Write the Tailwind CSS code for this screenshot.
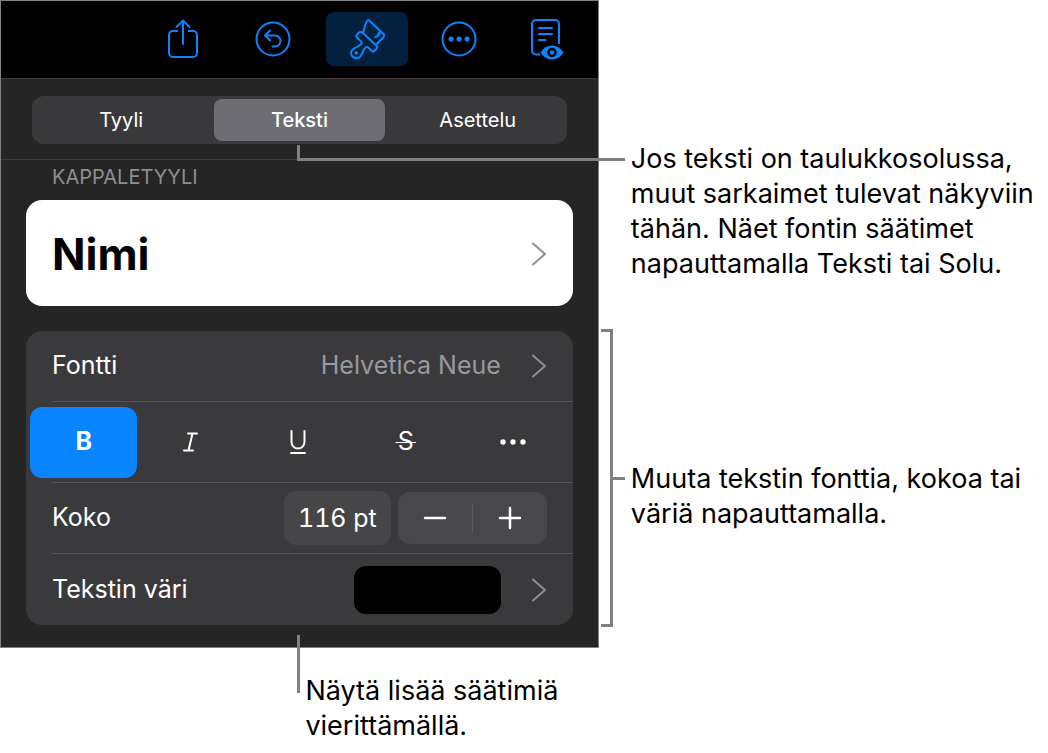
<!DOCTYPE html>
<html lang="fi">

<head>
    <meta charset="UTF-8">
    <meta name="viewport" content="width=device-width, initial-scale=1.0">
    <title>Tekstin muotoilu</title>
    <script src="https://cdn.jsdelivr.net/npm/@tailwindcss/browser@4"></script>
</head>

<body class="bg-white font-['Inter',sans-serif] text-black">
    <main class="grid grid-cols-[4fr_3fr]">
        <div>
            <!-- Format panel -->
            <section class="relative border border-[#808080] bg-[#252525] text-white" aria-label="Muotoilu">
                <nav class="flex h-[77px] items-center justify-end gap-2.5 bg-black pr-3.5 pb-0.5 text-[#0a84ff]">
                    <button type="button" aria-label="Jaa" class="flex h-[54px] w-[74px] items-center justify-center">
                        <svg class="h-10 w-8" viewBox="0 0 32 40" fill="none" stroke="currentColor" stroke-width="2" stroke-linecap="round" stroke-linejoin="round">
                            <path d="M11 12H6a4 4 0 0 0-4 4v18a4 4 0 0 0 4 4h20a4 4 0 0 0 4-4V16a4 4 0 0 0-4-4h-5" stroke-linecap="butt" />
                            <path d="M16 25V2M9.500 8 16 1.500 22.500 8" />
                        </svg>
                    </button>
                    <button type="button" aria-label="Kumoa" class="flex h-[54px] w-[86px] items-center justify-center">
                        <svg class="size-9" viewBox="0 0 36 36" fill="none" stroke="currentColor" stroke-width="2" stroke-linecap="round" stroke-linejoin="round">
                            <circle cx="18" cy="18" r="16.500" />
                            <path d="M15 9.500 10 14.500l5 5M10.500 14.500H20a5.500 5.500 0 0 1 0 11h-2.500" />
                        </svg>
                    </button>
                    <button type="button" aria-label="Muotoilu" class="flex h-[54px] w-[82px] items-center justify-center rounded-lg bg-[#03203e]">
                        <svg class="h-10 w-[38px]" viewBox="0 0 38 40" fill="none" stroke="currentColor" stroke-width="2" stroke-linecap="round" stroke-linejoin="round">
                            <path d="M14.500 13.800Q16 12 16.500 8.500 17.500 4.500 19 2.200q1.300-1.800 3 0L35.500 15q1.400 1.400 0 3L28 25.800" />
                            <path d="M14.800 13.800q-2.500-1.800-4.300.2L9 15.500q-1.500 1.500 0 3l4 3.900q1.200 1.300-.3 3-1.200 1.300-6.500 4.100a5 5 0 0 0-2.700 6.500 5.300 5.300 0 0 0 9.300.8q1-1.500 2.700-5.300 1.200-2.500 2.200-3.200 1.500-.8 2.800.5l3 3q1.500 1.500 3 0l2-2q1.500-1.500 0-3z" />
                            <path d="M32 12.300q1.300 6.200-6 6.200 4-1.500 4.500-5z" fill="currentColor" stroke-width="1" />
                            <circle cx="8.200" cy="34" r="1.300" fill="currentColor" stroke-width="1" />
                        </svg>
                    </button>
                    <button type="button" aria-label="Lisää" class="flex h-[54px] w-[82px] items-center justify-center">
                        <svg class="size-9" viewBox="0 0 36 36" fill="currentColor">
                            <circle cx="18" cy="18" r="16.500" fill="none" stroke="currentColor" stroke-width="2" />
                            <circle cx="10" cy="18" r="2.500" />
                            <circle cx="18" cy="18" r="2.500" />
                            <circle cx="26" cy="18" r="2.500" />
                        </svg>
                    </button>
                    <button type="button" aria-label="Lukunäkymä" class="flex h-[54px] w-[74px] items-center justify-center">
                        <svg class="h-[42px] w-[34px]" viewBox="0 0 34 42" fill="none" stroke="currentColor" stroke-width="2" stroke-linecap="round">
                            <path d="M10 36.500H6a4 4 0 0 1-4-4V6a4 4 0 0 1 4-4h19a4 4 0 0 1 4 4v20" stroke-linecap="butt" />
                            <path d="M9 10h13M9 16h13M9 22h6.500" />
                            <path d="M10.500 34.500Q15 27.500 22 27.500t11.500 7Q29 41.500 22 41.500t-11.500-7z" fill="currentColor" stroke="none" />
                            <circle cx="22" cy="34.500" r="3.500" stroke="#000" stroke-width="2.500" />
                        </svg>
                    </button>
                </nav>

                <div class="border-y border-[#3d3d3f] px-[31px] pt-[17px] pb-[15px]">
                    <div class="grid h-12 grid-cols-3 rounded-xl bg-[#39393b] text-xl">
                        <button type="button">Tyyli</button>
                        <button type="button" class="mx-1 my-[3px] rounded-lg bg-[#6e6d73] font-medium">Teksti</button>
                        <button type="button">Asettelu</button>
                    </div>
                </div>

                <div class="px-[25px] pb-[22px]">
                    <h2 class="h-10 px-[26px] pt-[3px] text-xl leading-7 text-[#8e8e93]">KAPPALETYYLI</h2>
                    <button type="button" class="flex h-[106px] w-full items-center justify-between rounded-2xl bg-white px-[26px] pt-0.5 text-[44px] font-bold text-black">
                        Nimi
                        <svg class="h-6 w-4" viewBox="0 0 16 24" fill="none" stroke="#8e8e93" stroke-width="2" stroke-linecap="round" stroke-linejoin="round">
                            <path d="M2 1.500 14 12 2 22.500" />
                        </svg>
                    </button>

                    <div class="mt-[25px] rounded-2xl bg-[#3a3a3c] text-[25px]">
                        <button type="button" class="flex h-[70px] w-full items-center px-[26px]">
                            Fontti
                            <span class="mr-[30px] ml-auto text-[#98989f]">Helvetica Neue</span>
                            <svg class="h-6 w-4" viewBox="0 0 16 24" fill="none" stroke="#8e8e93" stroke-width="2" stroke-linecap="round" stroke-linejoin="round">
                                <path d="M2 1.500 14 12 2 22.500" />
                            </svg>
                        </button>
                        <hr class="ml-[26px] border-[#545456]">
                        <div class="grid h-20 grid-cols-5 items-center pr-1.5 pl-1">
                            <button type="button" aria-label="Lihavointi" class="h-[71px] rounded-xl bg-[#0a84ff] font-bold">B</button>
                            <button type="button" aria-label="Kursivointi" class="flex h-[71px] items-center justify-center">
                                <svg class="h-5 w-4" viewBox="0 0 16 20" fill="none" stroke="currentColor" stroke-width="2" stroke-linecap="round">
                                    <path d="M5 1.500h9M1 18.500h9M9.500 1.500 5.500 18.500" />
                                </svg>
                            </button>
                            <button type="button" aria-label="Alleviivaus" class="flex h-[71px] items-center justify-center">
                                <svg class="h-6 w-5" viewBox="0 0 20 24" fill="none" stroke="currentColor" stroke-width="2" stroke-linecap="round">
                                    <path d="M3.500 1v11a6.500 6.500 0 0 0 13 0V1M3 23h14" />
                                </svg>
                            </button>
                            <button type="button" aria-label="Yliviivaus" class="flex h-[71px] items-center justify-center"><s class="px-1 decoration-1">&#8202;S&#8202;</s></button>
                            <button type="button" aria-label="Lisää tekstivalintoja" class="flex h-[71px] items-center justify-center">
                                <svg class="h-1.5 w-[26px]" viewBox="0 0 26 6" fill="currentColor">
                                    <circle cx="3" cy="3" r="2.700" />
                                    <circle cx="13" cy="3" r="2.700" />
                                    <circle cx="23" cy="3" r="2.700" />
                                </svg>
                            </button>
                        </div>
                        <hr class="ml-[26px] border-[#545456]">
                        <div class="flex h-[70px] items-center px-[26px]">
                            <label for="size">Koko</label>
                            <input id="size" type="text" value="116 pt" class="ml-auto h-[54px] w-[107px] rounded-xl bg-[#464648] text-center tabular-nums">
                            <div class="ml-[7px] flex h-[52px] w-[149px] items-center rounded-xl bg-[#48474c]">
                                <button type="button" aria-label="Pienennä" class="flex h-full flex-1 items-center justify-center">
                                    <svg class="size-6" viewBox="0 0 24 24" stroke="currentColor" stroke-width="2.500" stroke-linecap="round">
                                        <path d="M2 12h20" />
                                    </svg>
                                </button>
                                <span class="h-7 w-px bg-[#5c5c60]"></span>
                                <button type="button" aria-label="Suurenna" class="flex h-full flex-1 items-center justify-center">
                                    <svg class="size-6" viewBox="0 0 24 24" stroke="currentColor" stroke-width="2.500" stroke-linecap="round">
                                        <path d="M2 12h20M12 2v20" />
                                    </svg>
                                </button>
                            </div>
                        </div>
                        <hr class="ml-[26px] border-[#545456]">
                        <button type="button" class="flex h-[71px] w-full items-center px-[26px]">
                            Tekstin väri
                            <span class="mr-[30px] ml-auto h-12 w-[147px] rounded-xl bg-black"></span>
                            <svg class="h-6 w-4" viewBox="0 0 16 24" fill="none" stroke="#8e8e93" stroke-width="2" stroke-linecap="round" stroke-linejoin="round">
                                <path d="M2 1.500 14 12 2 22.500" />
                            </svg>
                        </button>
                    </div>
                </div>

                <!-- Callout lines -->
                <div class="absolute top-36 -right-[27px] left-1/2 -ml-0.5 h-4 border-b-3 border-l-3 border-[#808080]"></div>
                <div class="absolute -bottom-[46px] left-1/2 -ml-0.5 h-[58px] w-[3px] bg-[#808080]"></div>
            </section>
            <p class="mt-[25px] ml-[51%] text-[27px] leading-[35px] whitespace-nowrap">Näytä lisää säätimiä<br>vierittämällä.</p>
        </div>

        <div class="pt-[141px] text-[27px] leading-[35px] whitespace-nowrap">
            <p class="pl-8">Jos teksti on taulukkosolussa,<br>muut sarkaimet tulevat näkyviin<br>tähän. Näet fontin säätimet<br>napauttamalla Teksti tai Solu.</p>
            <div class="mt-12 ml-0.5 flex h-[298px] items-start">
                <div class="h-full w-3 border-y-3 border-r-3 border-[#808080]"></div>
                <div class="mt-[148px] h-[3px] w-3 bg-[#808080]"></div>
                <p class="mt-[132px] ml-1.5">Muuta tekstin fonttia, kokoa tai<br>väriä napauttamalla.</p>
            </div>
        </div>
    </main>
</body>

</html>
